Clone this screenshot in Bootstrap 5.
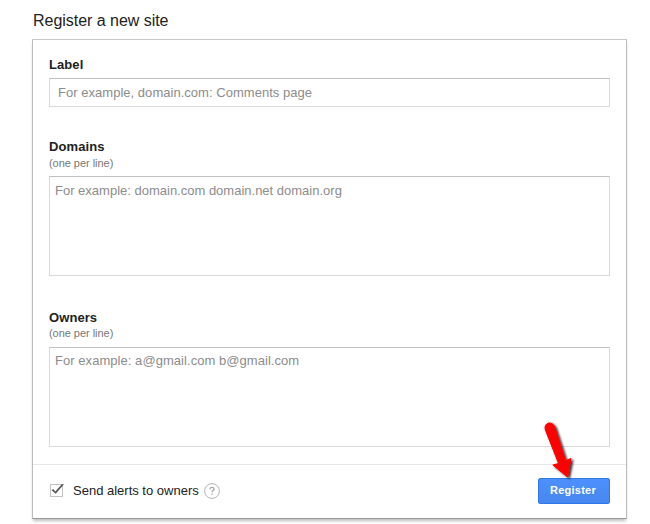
<!DOCTYPE html>
<html lang="en">
<head>
<meta charset="utf-8">
<meta name="viewport" content="width=device-width, initial-scale=1">
<title>Register a new site</title>
<link href="https://cdn.jsdelivr.net/npm/bootstrap@5.3.0/dist/css/bootstrap.min.css" rel="stylesheet">
<style>
  body { font-family: "Liberation Sans", Arial, sans-serif; font-size: 13px; line-height: 16px; color: #222; height: 524px; overflow: hidden; }
  .page { width: 595px; margin-left: 32px; padding-top: 11px; }
  .page-title { font-size: 16px; line-height: 20px; margin-bottom: 8px; padding-left: 1px; font-weight: 400; letter-spacing: -.03px; }
  .site-card { height: 480px; border: 1px solid #bcbcbc; border-top-color: #c8c8c8; border-bottom-color: #999; box-shadow: 0 3px 3px -1px rgba(0,0,0,.26); }
  .site-card .card-body { padding: 17px 16px 0; }
  .site-card .form-label { font-size: 13px; line-height: 16px; letter-spacing: .08px; }
  .hint { font-size: 11px; line-height: 14px; color: #777; letter-spacing: -.04px; }
  .site-card .form-control { font-size: 13px; line-height: 16px; border: 1px solid #d9d9d9; border-top-color: #c0c0c0; resize: none; }
  .site-card .form-control::placeholder { color: #8c8c8c; opacity: 1; }
  .site-card .line-input { height: 29px; padding: 0 8px; margin-top: 5px; letter-spacing: .03px; }
  .site-card .area-input { height: 100px; padding: 5px; }
  .group-label { margin-bottom: 32px; }
  .group-domains { margin-bottom: 34px; }
  .group-domains .hint { padding-top: 1px; margin-bottom: 6px; }
  .group-domains .area-input { padding-top: 6px; }
  .group-owners .hint { margin-bottom: 7px; }
  .group-owners .area-input { letter-spacing: .05px; }
  .alert-box { width: 15px; height: 15px; }
  .alert-text { margin-left: 9px; }
  .site-card .card-footer { height: 54px; padding: 0 16px 2px; border-top: 1px solid #e7e7e7; }
  .site-card .btn-register { width: 72px; height: 26px; padding: 0 2px 2px 0; font-size: 11px; line-height: 22px; letter-spacing: .25px; color: #fff; border: 1px solid #3079ed; border-radius: 2px; background: linear-gradient(#4d90fe, #4787ed); }
  .pointer { left: 505px; top: 377px; z-index: 2; }
</style>
</head>
<body class="bg-white">
<main class="page">
  <h1 class="page-title">Register a new site</h1>
  <form class="card site-card rounded-0 bg-white position-relative">
    <div class="card-body">
      <div class="group-label">
        <label class="form-label fw-bold d-block mb-0" for="label">Label</label>
        <input class="form-control line-input rounded-0" id="label" placeholder="For example, domain.com: Comments page">
      </div>
      <div class="group-domains">
        <label class="form-label fw-bold d-block mb-0" for="domains">Domains</label>
        <div class="hint">(one per line)</div>
        <textarea class="form-control area-input rounded-0" id="domains" placeholder="For example: domain.com domain.net domain.org"></textarea>
      </div>
      <div class="group-owners">
        <label class="form-label fw-bold d-block mb-0" for="owners">Owners</label>
        <div class="hint">(one per line)</div>
        <textarea class="form-control area-input rounded-0" id="owners" placeholder="For example: a@gmail.com b@gmail.com"></textarea>
      </div>
    </div>
    <div class="card-footer bg-white rounded-0 d-flex align-items-center">
      <svg class="alert-box" viewBox="0 0 15 15" role="img" aria-label="Checked">
        <rect x="1.5" y="1.5" width="12" height="12" fill="#fff" stroke="#c2c2c2"/>
        <path d="M2.300 7 4.600 6.200 6.300 8.400 12.800 1.200 15 1.200 6.700 10.800Z" fill="#555"/>
      </svg>
      <span class="alert-text">Send alerts to owners</span>
      <svg class="ms-1" width="18" height="18" viewBox="0 0 18 18" role="img" aria-label="Help">
        <circle cx="9" cy="9" r="7.4" fill="#fff" stroke="#b3b3b3"/>
        <path d="M6.900 7.300Q7 5.400 9 5.400T11.100 7.100Q11.100 8 10 8.700Q9.100 9.200 9.100 10.300M9.100 11.400V12.800" fill="none" stroke="#aaa" stroke-width="1.400"/>
      </svg>
      <button class="btn btn-register fw-bold ms-auto" type="button">Register</button>
    </div>
    <svg class="pointer position-absolute" width="45" height="66" viewBox="538 417 45 66" aria-hidden="true">
      <defs><filter id="shade" x="-30%" y="-20%" width="170%" height="150%"><feDropShadow dx="2" dy="1.5" stdDeviation="1.1" flood-color="#000" flood-opacity=".8"/></filter></defs>
      <path filter="url(#shade)" fill="#f00" stroke="#f00" stroke-linejoin="round" d="M545.200 429.500C543.500 422.500 552 420.500 554.500 426.500L565.500 460.500L571 458.500L567.500 477L552.800 465L558.500 463.500Z"/>
    </svg>
  </form>
</main>
<script src="https://cdn.jsdelivr.net/npm/bootstrap@5.3.0/dist/js/bootstrap.bundle.min.js"></script>
</body>
</html>
